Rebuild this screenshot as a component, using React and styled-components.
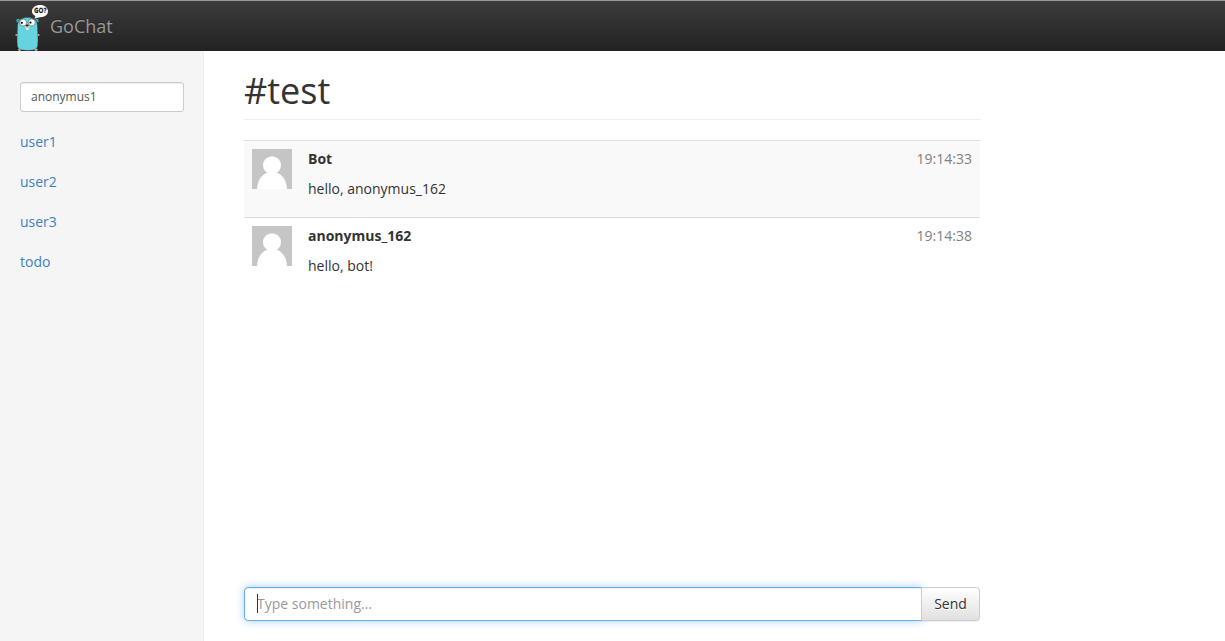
import React from "react";
import styled, { createGlobalStyle } from "styled-components";

const GlobalStyle = createGlobalStyle`
  *, *::before, *::after { box-sizing: border-box; }
  body {
    margin: 0;
    font-family: "Open Sans", "Noto Sans", sans-serif;
    font-size: 14px;
    line-height: 20px;
    color: #333;
    background: #fff;
  }
`;

const Page = styled.div`
  display: flex;
  flex-direction: column;
  height: 100vh;
  overflow: hidden;
`;

const Navbar = styled.header`
  display: flex;
  flex: none;
  height: 51px;
  padding-left: 15px;
  border-top: 1px solid #999;
  background: linear-gradient(to bottom, #3c3c3c 0%, #222 100%);
`;

const Brand = styled.a`
  display: flex;
  gap: 2px;
  color: #999;
  font-size: 18px;
  line-height: 50px;
  text-shadow: 0 -1px 0 rgba(0, 0, 0, 0.25);
`;

const Logo = styled.svg`
  display: block;
  width: 33px;
  height: 50px;
`;

const Body = styled.div`
  display: flex;
  flex: 1;
  min-height: 0;
`;

const Sidebar = styled.aside`
  flex: none;
  width: 204px;
  padding: 31px 20px 20px;
  background: #f5f5f5;
  border-right: 1px solid #eee;
`;

const NameInput = styled.input`
  display: block;
  width: 164px;
  height: 30px;
  margin-bottom: 10px;
  padding: 4px 10px 6px;
  border: 1px solid #ccc;
  border-radius: 3px;
  background: #fff;
  box-shadow: inset 0 1px 1px rgba(0, 0, 0, 0.075);
  color: #555;
  font: 12px/18px "Open Sans", "Noto Sans", sans-serif;
`;

const UserList = styled.nav`
  display: flex;
  flex-direction: column;
`;

const UserLink = styled.a`
  padding: 10px 0;
  color: #3b83c0;
`;

const Main = styled.main`
  display: flex;
  flex-direction: column;
  width: 777px;
  padding: 20px 0 20px 40px;
`;

const Title = styled.h1`
  margin: 0 0 20px;
  height: 49px;
  border-bottom: 1px solid #eee;
  font-size: 36px;
  font-weight: 400;
  line-height: 40px;
`;

const Messages = styled.section`
  flex: 1;
  width: 736px;
`;

const Message = styled.article`
  display: flex;
  height: 77px;
  padding: 8px;
  border-top: 1px solid #ddd;
  background: ${(p) => (p.$striped ? "#f9f9f9" : "#fff")};
`;

const Avatar = styled.svg`
  flex: none;
  display: block;
  width: 40px;
  height: 40px;
  margin-right: 16px;
`;

const MessageBody = styled.div`
  flex: 1;
`;

const Author = styled.strong`
  display: block;
  font-weight: 700;
`;

const Text = styled.p`
  margin: 10px 0;
`;

const Time = styled.time`
  color: #808080;
`;

const Composer = styled.form`
  display: flex;
  width: 736px;
  height: 34px;
`;

const Field = styled.div`
  position: relative;
  flex: 1;
  margin-right: -1px;
`;

const MessageInput = styled.input`
  display: block;
  width: 100%;
  height: 34px;
  padding: 5px 12px 7px;
  border: 1px solid #66afe9;
  border-radius: 4px 0 0 4px;
  outline: 0;
  background: #fff;
  box-shadow: inset 0 1px 1px rgba(0, 0, 0, 0.075), 0 0 8px rgba(102, 175, 233, 0.6);
  color: #555;
  caret-color: transparent;
  font: 14px/20px "Open Sans", "Noto Sans", sans-serif;
  &::placeholder { color: #999; opacity: 1; }
`;

const Caret = styled.span`
  position: absolute;
  left: 13px;
  top: 7px;
  width: 1px;
  height: 19px;
  background: #333;
`;

const SendButton = styled.button`
  position: relative;
  width: 59px;
  height: 34px;
  padding: 6px 0;
  border: 1px solid #ccc;
  border-radius: 0 4px 4px 0;
  background: linear-gradient(to bottom, #fff 0%, #e0e0e0 100%);
  box-shadow: inset 0 1px 0 rgba(255, 255, 255, 0.15), 0 1px 1px rgba(0, 0, 0, 0.075);
  color: #333;
  font: 14px/20px "Open Sans", "Noto Sans", sans-serif;
  text-shadow: 0 1px 0 #fff;
`;

const BubbleText = styled.text`
  font: 700 6.2px "Open Sans", sans-serif;
  fill: #111;
`;

function GopherLogo() {
  return (
    <Logo viewBox="0 0 33 50" aria-hidden="true">
      <g fill="#e9c9a0" stroke="#222" strokeWidth=".35">
        <ellipse cx="1.7" cy="34" rx="1.5" ry="1.1" />
        <ellipse cx="23.4" cy="34" rx="1.5" ry="1.1" />
        <ellipse cx="4.6" cy="48.8" rx="1.7" ry="1.2" />
        <ellipse cx="21" cy="48.8" rx="1.7" ry="1.2" />
      </g>
      <circle cx="3.2" cy="19.8" r="2" fill="#62d0e0" stroke="#17363c" strokeWidth=".5" />
      <circle cx="21.8" cy="19.8" r="2" fill="#62d0e0" stroke="#17363c" strokeWidth=".5" />
      <circle cx="3.2" cy="20" r=".8" fill="#193b42" />
      <circle cx="21.8" cy="20" r=".8" fill="#193b42" />
      <path
        d="M2.5 25C2.8 19.2 6.6 16.6 12.5 16.6S22.1 19.2 22.4 25C22.6 31 23.5 39 22.6 45C22 48.3 19 49.4 12.7 49.4S3 48.4 2.4 45C1.6 39 2.4 31 2.5 25Z"
        fill="#67d3e1"
        stroke="#24454a"
        strokeWidth=".4"
      />
      <circle cx="8.2" cy="21.6" r="3.5" fill="#fff" stroke="#29464b" strokeWidth=".5" />
      <circle cx="16.8" cy="21.4" r="3.5" fill="#fff" stroke="#29464b" strokeWidth=".5" />
      <circle cx="6.8" cy="21.8" r="1.1" fill="#111" />
      <circle cx="15.5" cy="21.6" r="1.1" fill="#111" />
      <rect x="11.1" y="26" width="2.4" height="2.8" rx=".4" fill="#fff" />
      <ellipse cx="12.3" cy="25.9" rx="2.4" ry="1.5" fill="#e9c9a0" />
      <ellipse cx="12.2" cy="24.5" rx="1.4" ry=".9" fill="#222" />
      <path
        d="M25 4C29.5 4 33 6.6 33 10.2S29.7 16.1 25.2 16.2C23.5 16.2 22.3 17.2 18.6 17.5C20.3 16.6 20.6 15.5 20.2 14.9C18.1 13.8 17 12.2 17 10.2C17 6.6 20.5 4 25 4Z"
        fill="#fff"
      />
      <BubbleText x="18.9" y="12.3" textLength="12.6" lengthAdjust="spacingAndGlyphs">GO?</BubbleText>
    </Logo>
  );
}

function DefaultAvatar() {
  return (
    <Avatar viewBox="0 0 40 40" aria-hidden="true">
      <rect width="40" height="40" fill="#c5c5c5" />
      <circle cx="20" cy="16.2" r="9" fill="#fff" />
      <path d="M5 40C5.6 31 9.5 25.7 15 23.7H25C30.5 25.7 34.4 31 35 40Z" fill="#fff" />
    </Avatar>
  );
}

const users = ["user1", "user2", "user3", "todo"];

const messages = [
  { author: "Bot", text: "hello, anonymus_162", time: "19:14:33" },
  { author: "anonymus_162", text: "hello, bot!", time: "19:14:38" },
];

export default function App() {
  return (
    <Page>
      <GlobalStyle />
      <Navbar>
        <Brand>
          <GopherLogo />
          <span>GoChat</span>
        </Brand>
      </Navbar>
      <Body>
        <Sidebar>
          <NameInput defaultValue="anonymus1" aria-label="Name" spellCheck={false} />
          <UserList>
            {users.map((user) => (
              <UserLink key={user}>{user}</UserLink>
            ))}
          </UserList>
        </Sidebar>
        <Main>
          <Title>#test</Title>
          <Messages>
            {messages.map((m, i) => (
              <Message key={m.time} $striped={i % 2 === 0}>
                <DefaultAvatar />
                <MessageBody>
                  <Author>{m.author}</Author>
                  <Text>{m.text}</Text>
                </MessageBody>
                <Time>{m.time}</Time>
              </Message>
            ))}
          </Messages>
          <Composer>
            <Field>
              <MessageInput placeholder="Type something..." aria-label="Message" />
              <Caret />
            </Field>
            <SendButton type="button">Send</SendButton>
          </Composer>
        </Main>
      </Body>
    </Page>
  );
}
